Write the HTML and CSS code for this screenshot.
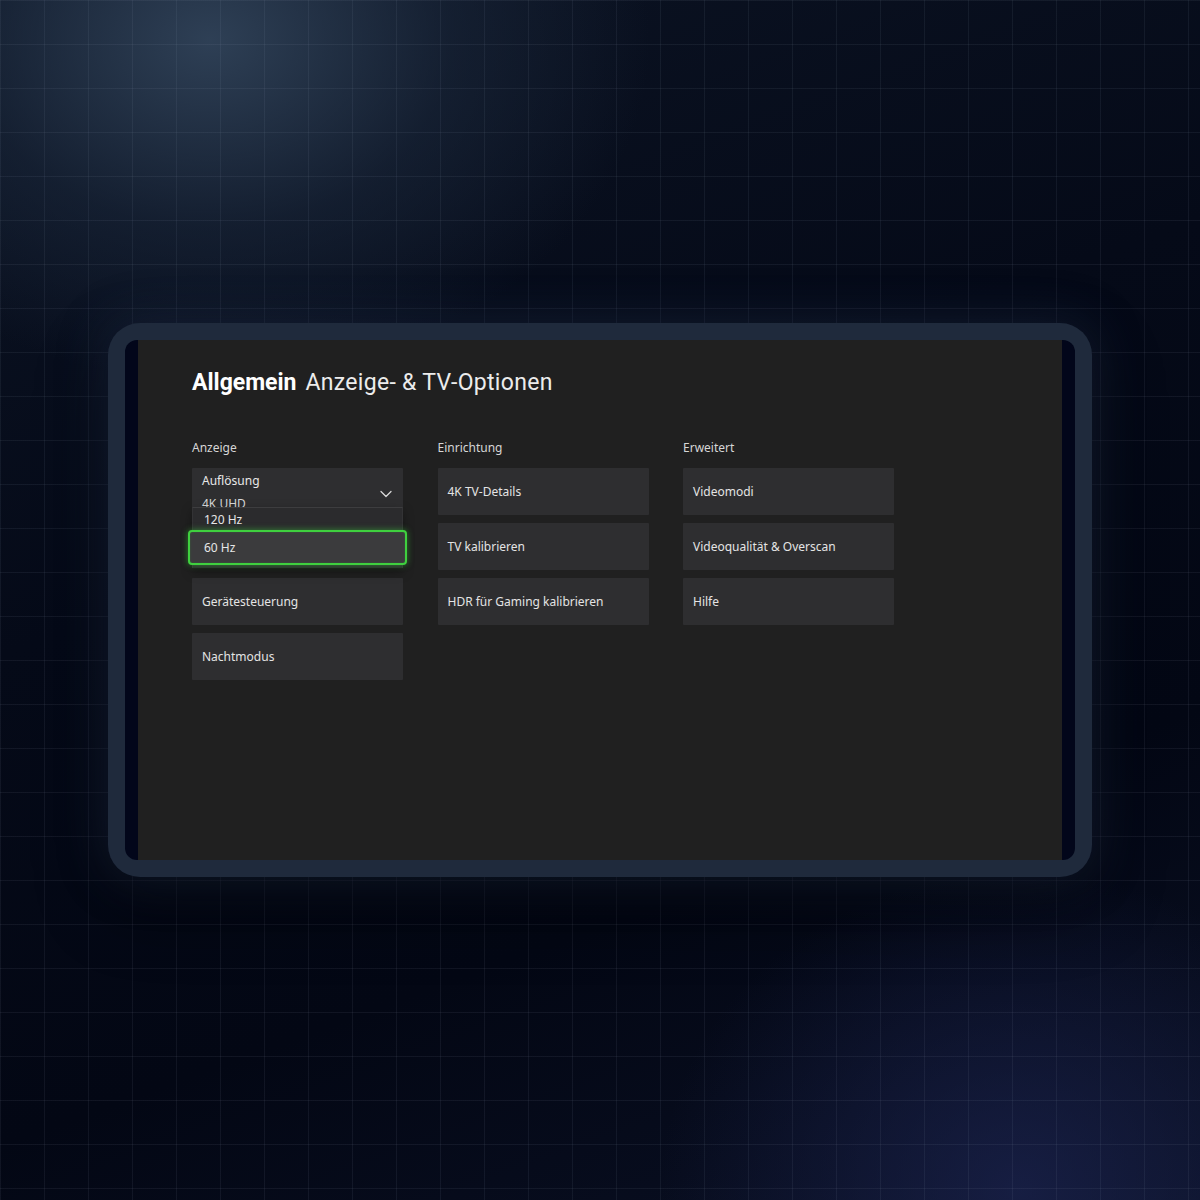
FILE: index.html
```html
<!DOCTYPE html>
<html lang="de">
<head>
<meta charset="utf-8">
<title>Anzeige- &amp; TV-Optionen</title>
<link rel="stylesheet" href="styles.css">
</head>
<body>
<div class="stage">
  <div class="frame">
    <div class="screen">
      <div class="content">
        <h1 class="title"><span class="title-strong">Allgemein</span><span class="title-light">Anzeige- &amp; TV-Optionen</span></h1>
        <div class="columns">
          <section class="column">
            <h2 class="label">Anzeige</h2>
            <div class="tiles">
              <div class="dropdown">
                <div class="tile tile-select">
                  <div class="select-text">
                    <span class="select-name">Auflösung</span>
                    <span class="select-value">4K UHD</span>
                  </div>
                  <svg class="chevron" width="12" height="8" viewBox="0 0 12 8" aria-hidden="true"><path d="M1 1.5 L6 6.5 L11 1.5" fill="none" stroke="#d8d8d8" stroke-width="1.3" stroke-linecap="round" stroke-linejoin="round"/></svg>
                </div>
                <div class="options">
                  <div class="option">120 Hz</div>
                  <div class="option option-focus">60 Hz</div>
                </div>
              </div>
              <div class="tile tile-hidden"></div>
              <div class="tile">Gerätesteuerung</div>
              <div class="tile">Nachtmodus</div>
            </div>
          </section>
          <section class="column">
            <h2 class="label">Einrichtung</h2>
            <div class="tiles">
              <div class="tile">4K TV-Details</div>
              <div class="tile">TV kalibrieren</div>
              <div class="tile">HDR für Gaming kalibrieren</div>
            </div>
          </section>
          <section class="column">
            <h2 class="label">Erweitert</h2>
            <div class="tiles">
              <div class="tile">Videomodi</div>
              <div class="tile">Videoqualität &amp; Overscan</div>
              <div class="tile">Hilfe</div>
            </div>
          </section>
        </div>
      </div>
    </div>
  </div>
</div>
</body>
</html>
```
FILE: styles.css
```css
html, body {
  margin: 0;
  padding: 0;
}
body {
  width: 1200px;
  height: 1200px;
  overflow: hidden;
  font-family: "Noto Sans", "Open Sans", sans-serif;
  background-color: #040816;
  background-image:
    linear-gradient(rgba(148, 163, 184, 0.09) 1px, transparent 1px),
    linear-gradient(90deg, rgba(148, 163, 184, 0.09) 1px, transparent 1px),
    radial-gradient(ellipse 440px 340px at 210px 40px, rgba(48, 66, 88, 0.95), rgba(30, 44, 64, 0.5) 55%, transparent 100%),
    radial-gradient(ellipse 360px 320px at 1020px 1190px, rgba(28, 36, 80, 0.7), transparent 100%),
    linear-gradient(160deg, #0c1424 0%, #050a18 40%, #030714 70%, #0a1024 100%);
  background-size: 44px 44px, 44px 44px, 100% 100%, 100% 100%, 100% 100%;
}
.stage {
  width: 1200px;
  height: 1200px;
  display: flex;
  align-items: center;
  justify-content: center;
}
.frame {
  width: 950px;
  height: 520px;
  padding: 17px;
  background: #1f2a3c;
  border-radius: 32px;
  box-shadow: 0 0 50px rgba(40, 58, 90, 0.4), 0 30px 70px rgba(0, 0, 0, 0.45);
}
.screen {
  height: 520px;
  padding: 0 13px;
  background: #02061a;
  border-radius: 12px;
  overflow: hidden;
}
.content {
  height: 520px;
  box-sizing: border-box;
  background: #202020;
  padding: 28px 54px 0;
}
.title {
  margin: 0;
  font-family: Roboto, "Noto Sans", sans-serif;
  font-size: 23px;
  line-height: 30px;
  color: #f2f2f2;
  font-weight: 400;
  display: flex;
  gap: 9px;
}
.title-strong {
  font-weight: 700;
  color: #ffffff;
}
.title-light {
  font-weight: 400;
  color: #ececec;
  letter-spacing: 0.3px;
}
.columns {
  margin-top: 41px;
  display: grid;
  grid-template-columns: repeat(3, 211px);
  column-gap: 34.5px;
}
.label {
  margin: 0 0 11px;
  font-size: 12px;
  line-height: 18px;
  font-weight: 400;
  color: #d6d6d6;
}
.tiles {
  display: flex;
  flex-direction: column;
  gap: 8px;
}
.tile {
  height: 47px;
  box-sizing: border-box;
  padding: 0 10px;
  display: flex;
  align-items: center;
  background: #2e2e30;
  border-radius: 1px;
  font-size: 12px;
  color: #e4e4e4;
}
.tile-hidden {
  visibility: hidden;
}
.dropdown {
  position: relative;
}
.tile-select {
  align-items: flex-start;
  justify-content: space-between;
  padding: 3px 11px 0 10px;
}
.select-text {
  display: flex;
  flex-direction: column;
}
.select-name {
  line-height: 20px;
  color: #e8e8e8;
}
.select-value {
  line-height: 26px;
  color: #d8d8d8;
}
.chevron {
  margin-top: 19px;
}
.options {
  position: absolute;
  top: 39px;
  left: 0;
  right: 0;
  z-index: 2;
  height: 61px;
  box-sizing: border-box;
  padding-top: 1px;
  background: #2b2b2d;
  border-top: 1px solid #3d3d3f;
  border-left: 1px solid #333335;
  border-right: 1px solid #333335;
  box-shadow: 0 4px 10px rgba(0, 0, 0, 0.35);
}
.option {
  height: 21px;
  display: flex;
  align-items: center;
  padding-left: 11px;
  font-size: 12px;
  color: #e6e6e6;
}
.option-focus {
  height: 35px;
  box-sizing: border-box;
  margin: 0 -5px;
  padding-left: 14px;
  background: #3b3b3d;
  border: 2px solid #3fd03f;
  border-radius: 4px;
  box-shadow: 0 0 6px rgba(60, 210, 60, 0.55), inset 0 0 2px rgba(60, 210, 60, 0.3);
}
```
